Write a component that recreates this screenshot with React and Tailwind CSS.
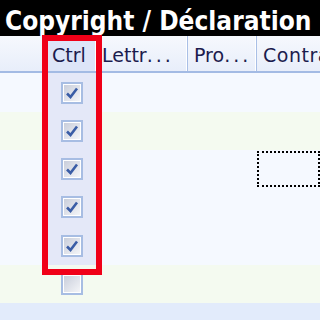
import React from 'react'

const rows = [
  { checked: true, bg: 'bg-[#f5f9ff]' },
  { checked: true, bg: 'bg-[#f4faf0]' },
  { checked: true, bg: 'bg-[#f5f9ff]', focus: true },
  { checked: true, bg: 'bg-[#f5f9ff]' },
  { checked: true, bg: 'bg-[#f5f9ff]' },
  { checked: false, bg: 'bg-[#f4faf0]' },
]

const rowHeights = ['h-[39px]', 'h-[38px]', 'h-[38px]', 'h-[38px]', 'h-[39px]', 'h-[38px]']

const CheckBox = ({ checked }) => (
  <div className="w-[22px] h-[22px] border-2 border-[#a7bde3] bg-white p-[1px]">
    <div className="w-full h-full bg-gradient-to-br from-[#c9cedb] to-[#f4f5f8] flex items-center justify-center">
      {checked && (
        <svg width="16" height="16" viewBox="0 0 16 16">
          <path d="M3 8.5 L6.5 12 L13 3.5" fill="none" stroke="#3a5da6" strokeWidth="2.6" strokeLinejoin="miter" />
        </svg>
      )}
    </div>
  </div>
)

const HeaderCell = ({ children, className }) => (
  <div className={`h-full flex items-center pt-[3px] border-r border-[#a9bfe6] shadow-[inset_-1px_0_0_#ffffff] ${className}`}>
    {children}
  </div>
)

export default function App() {
  return (
    <div className="relative w-[320px] h-[320px] overflow-hidden bg-[#f5f9ff] font-['DejaVu_Sans',sans-serif]">
      {/* title bar */}
      <div className="h-[36px] bg-black text-white font-bold text-[26px] leading-none pl-[5px] pt-[8px] whitespace-nowrap font-['DejaVu_Sans_Condensed','DejaVu_Sans',sans-serif] [font-stretch:condensed]">
        Copyright / Déclaration
      </div>

      {/* column header */}
      <div className="h-[37px] flex bg-gradient-to-b from-[#f6f8fd] to-[#e8eefa] border-b-2 border-[#a3bbe4] text-[#1c1c4e] text-[19px] whitespace-nowrap">
        <HeaderCell className="w-[46px] shrink-0" />
        <HeaderCell className="w-[51px] shrink-0 pl-[6px] bg-[#dde5f8]">Ctrl</HeaderCell>
        <HeaderCell className="w-[91px] shrink-0 pl-[5px]">
          Lettr<span className="tracking-[3px]">...</span>
        </HeaderCell>
        <HeaderCell className="w-[69px] shrink-0 pl-[6px]">
          Pro<span className="tracking-[3px]">...</span>
        </HeaderCell>
        <div className="flex-1 h-full flex items-center pt-[3px] pl-[6px] overflow-hidden tracking-[0.5px]">Contra</div>
      </div>

      {/* rows */}
      {rows.map((r, i) => (
        <div key={i} className={`flex ${rowHeights[i]} ${r.bg}`}>
          <div className="w-[46px] shrink-0" />
          <div className={`w-[51px] shrink-0 flex items-center justify-center ${r.checked ? 'bg-[#e4e8f8]' : ''}`}>
            <CheckBox checked={r.checked} />
          </div>
          <div className="w-[91px] shrink-0" />
          <div className="w-[69px] shrink-0" />
          <div className="flex-1 py-[1px]">
            {r.focus && <div className="h-full border-2 border-dotted border-black" />}
          </div>
        </div>
      ))}

      {/* footer */}
      <div className="h-[17px] bg-[#e2ebfb]" />

      {/* red highlight annotation */}
      <div className="absolute left-[42px] top-[35px] w-[60px] h-[240px] border-[6px] border-[#f00018]" />
    </div>
  )
}
